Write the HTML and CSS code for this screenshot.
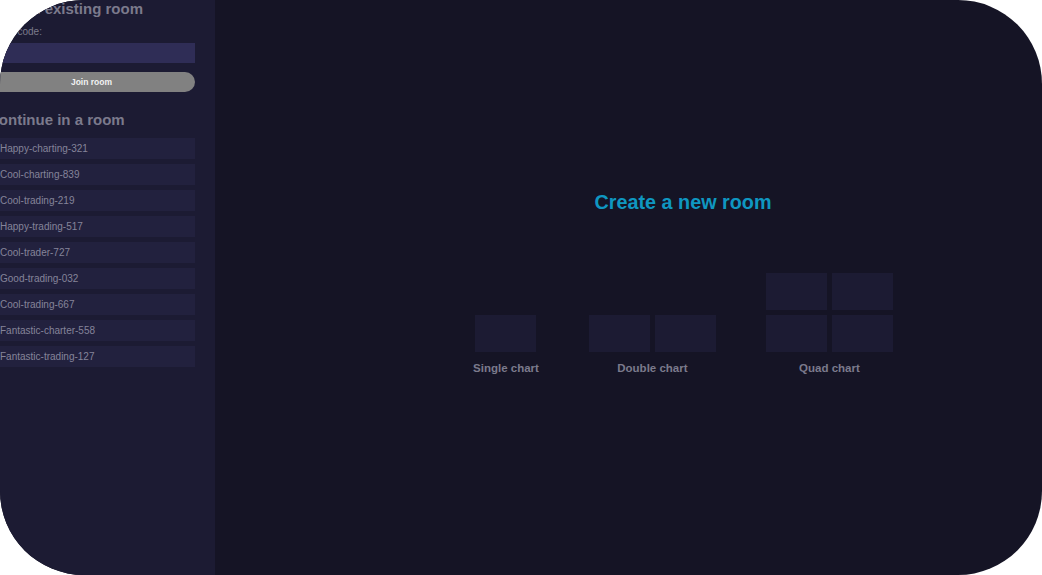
FILE: index.html
```html
<!DOCTYPE html>
<html>
<head>
<meta charset="utf-8">
<link rel="stylesheet" href="styles.css">
</head>
<body>
<div class="app">
  <aside class="sidebar">
    <div class="side-inner">
      <h2 class="side-title">Join an existing room</h2>
      <label class="field-label">Room code:</label>
      <div class="code-input"></div>
      <button class="join-btn">Join room</button>
      <h2 class="side-title second">Continue in a room</h2>
      <ul class="room-list">
        <li class="room-item">Happy-charting-321</li>
        <li class="room-item">Cool-charting-839</li>
        <li class="room-item">Cool-trading-219</li>
        <li class="room-item">Happy-trading-517</li>
        <li class="room-item">Cool-trader-727</li>
        <li class="room-item">Good-trading-032</li>
        <li class="room-item">Cool-trading-667</li>
        <li class="room-item">Fantastic-charter-558</li>
        <li class="room-item">Fantastic-trading-127</li>
      </ul>
    </div>
  </aside>
  <main class="main">
    <h1 class="create-title">Create a new room</h1>
    <div class="options">
      <div class="option">
        <div class="grid grid-1"><div class="cell"></div></div>
        <div class="option-label">Single chart</div>
      </div>
      <div class="option">
        <div class="grid grid-2"><div class="cell"></div><div class="cell"></div></div>
        <div class="option-label">Double chart</div>
      </div>
      <div class="option">
        <div class="grid grid-2"><div class="cell"></div><div class="cell"></div><div class="cell"></div><div class="cell"></div></div>
        <div class="option-label">Quad chart</div>
      </div>
    </div>
  </main>
</div>
</body>
</html>
```
FILE: styles.css
```css
* { box-sizing: border-box; }
html, body {
  margin: 0;
  padding: 0;
  background: #ffffff;
}
body {
  font-family: "Liberation Sans", Arial, sans-serif;
}
.app {
  width: 1042px;
  height: 575px;
  border-radius: 84px;
  overflow: hidden;
  display: flex;
  background: #151425;
}
.sidebar {
  width: 215px;
  flex: none;
  background: #1c1b33;
  padding-right: 20px;
}
.side-inner {
  margin-left: -12px;
}
.side-title {
  margin: 0;
  font-size: 15px;
  line-height: 18px;
  font-weight: bold;
  color: #7b7a8c;
}
.side-title.second {
  margin-top: 19px;
}
.field-label {
  display: block;
  margin-top: 8px;
  font-size: 10px;
  line-height: 12px;
  color: #7b7a8c;
}
.code-input {
  margin-top: 5px;
  height: 20px;
  background: #2f2d56;
}
.join-btn {
  display: block;
  width: 100%;
  margin-top: 9px;
  height: 20px;
  border: none;
  border-radius: 10px;
  background: #818181;
  color: #f2f2f2;
  font-family: "Liberation Sans", Arial, sans-serif;
  font-size: 8.5px;
  font-weight: bold;
  padding: 0;
}
.room-list {
  list-style: none;
  margin: 9px 0 0;
  padding: 0;
  display: flex;
  flex-direction: column;
  gap: 5px;
}
.room-item {
  height: 21px;
  line-height: 21px;
  padding-left: 12px;
  background: #22213e;
  font-size: 10px;
  color: #85849a;
}
.main {
  flex: 1;
  padding-left: 109px;
  display: flex;
  flex-direction: column;
  align-items: center;
}
.create-title {
  margin: 190px 0 0;
  font-size: 19.8px;
  line-height: 24px;
  font-weight: bold;
  color: #0f97c1;
}
.options {
  margin-top: 59px;
  display: flex;
  align-items: flex-end;
  gap: 50px;
}
.option {
  display: flex;
  flex-direction: column;
  align-items: center;
}
.grid {
  display: grid;
  gap: 5px;
}
.grid-1 { grid-template-columns: 61px; }
.grid-2 { grid-template-columns: 61px 61px; }
.cell {
  height: 37px;
  background: #1c1b33;
}
.option-label {
  margin-top: 9px;
  font-size: 11.5px;
  line-height: 14px;
  font-weight: bold;
  color: #7b7a8c;
}
```
